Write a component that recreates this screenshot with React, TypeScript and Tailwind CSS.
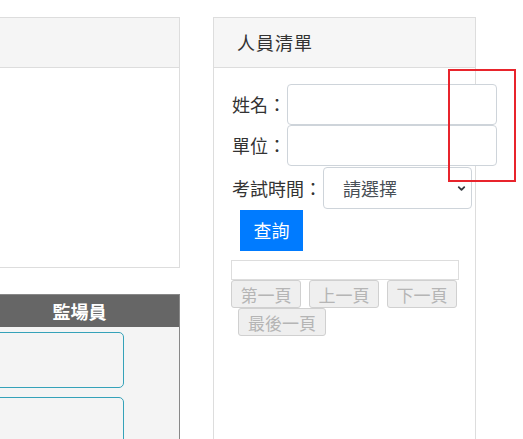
import { ChevronDown } from "lucide-react";

const font = { fontFamily: '"Noto Sans CJK TC", "Noto Sans", sans-serif' };

const PagerButton = ({ label, className = "" }: { label: string; className?: string }) => (
  <button
    disabled
    className={`h-[28px] shrink-0 whitespace-nowrap rounded-[3px] border border-[#d0d0d0] bg-[#efefef] text-[17px] leading-none text-[#b5b5b5] ${className}`}
  >
    {label}
  </button>
);

const Field = ({ label }: { label: string }) => (
  <div className="flex items-center w-max">
    <span className="shrink-0 whitespace-nowrap text-[18px] text-[#333]">{label}</span>
    <input className="ml-px w-[210px] h-[41px] rounded-[4px] border border-[#ced4da] bg-white shrink-0" />
  </div>
);

export default function App() {
  return (
    <div className="relative w-[523px] h-[439px] overflow-hidden bg-white" style={font}>
      <div className="flex items-start pt-[17px]">
        {/* left column */}
        <div className="ml-[-21px] w-[201px] shrink-0 flex flex-col">
          <div className="h-[251px] border border-[#dddddd] bg-white flex flex-col">
            <div className="h-[50px] bg-[#f5f5f5] border-b border-[#dddddd]" />
          </div>
          <div className="mt-[26px] h-[160px] border border-[#888] bg-[#f4f4f4] flex flex-col">
            <div className="h-[33px] bg-[#666666] flex items-center justify-center text-white font-bold text-[18px]">
              監場員
            </div>
            <div className="flex flex-col gap-[9px] pt-[5px] pr-[55px]">
              <div className="h-[56px] rounded-[5px] border border-[#35a2b9]" />
              <div className="h-[56px] rounded-[5px] border border-[#35a2b9]" />
            </div>
          </div>
        </div>

        {/* right card */}
        <div className="ml-[33px] w-[263px] h-[440px] shrink-0 border border-[#dddddd] bg-white flex flex-col">
          <div className="h-[50px] bg-[#f6f6f6] border-b border-[#dddddd] flex items-center pl-[23px] text-[18px] text-[#333] tracking-[1px]">
            人員清單
          </div>
          <div className="pt-[16px] pl-[18px] flex flex-col items-start">
            <Field label="姓名：" />
            <Field label="單位：" />
            <div className="flex items-center w-max mt-px">
              <span className="shrink-0 whitespace-nowrap text-[18px] text-[#333]">考試時間：</span>
              <div className="relative ml-[1px] w-[149px] h-[42px] shrink-0 rounded-[4px] border border-[#ced4da] bg-white flex items-center pl-[19px] text-[18px] text-[#495057]">
                請選擇
                <ChevronDown className="absolute right-[4px] top-[15px] w-[11px] h-[11px] text-[#343a40]" strokeWidth={4} />
              </div>
            </div>
            <button className="mt-px ml-[8px] w-[63px] h-[41px] bg-[#007bff] text-white text-[18px]">
              查詢
            </button>
            <div className="-ml-px mt-[9px] w-[228px] h-[20px] border border-[#dddddd]" />
            <div className="-ml-px w-[228px] flex flex-wrap gap-x-[8px]">
              <PagerButton label="第一頁" className="w-[70px]" />
              <PagerButton label="上一頁" className="w-[70px]" />
              <PagerButton label="下一頁" className="w-[70px]" />
              <PagerButton label="最後一頁" className="w-[88px] ml-[7px]" />
            </div>
          </div>
        </div>
      </div>

      {/* annotation box */}
      <div className="absolute left-[448px] top-[69px] w-[68px] h-[113px] border-2 border-[#e8242c] pointer-events-none" />
    </div>
  );
}
